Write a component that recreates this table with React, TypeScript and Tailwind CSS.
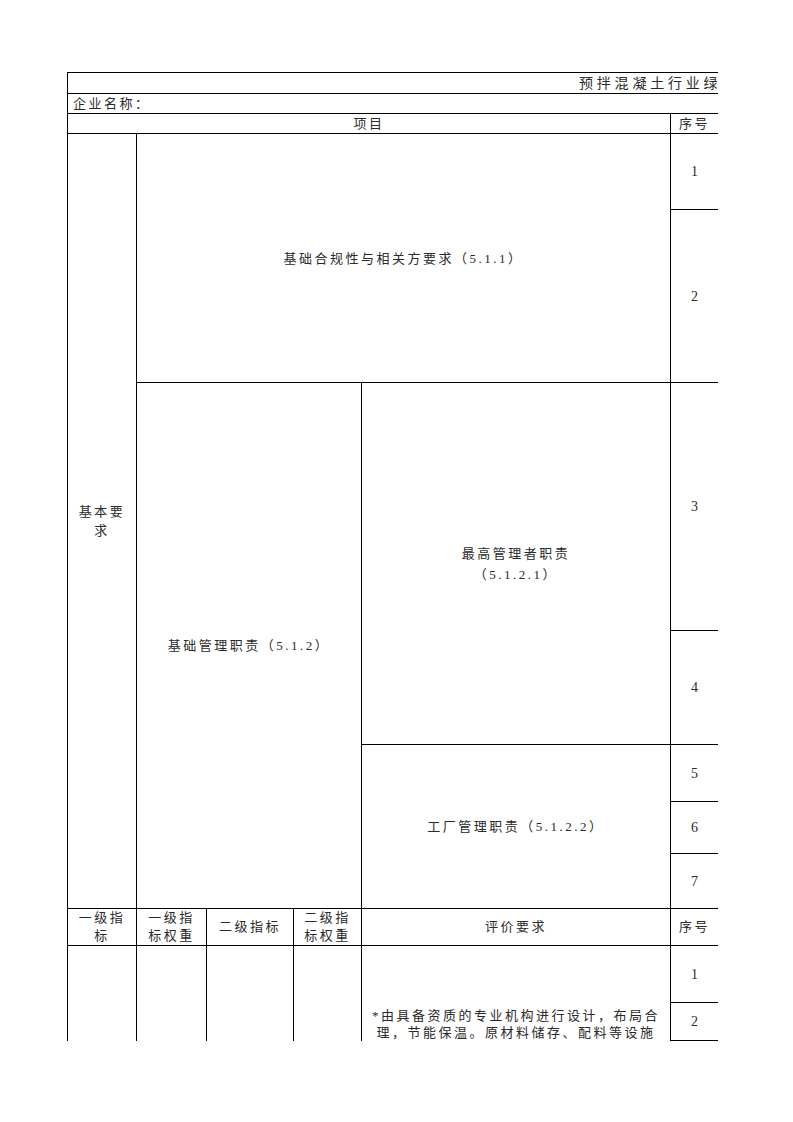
import React from 'react'

const cell = 'border border-black p-0 text-center align-middle'

const seq = (n: number) => (
  <td className={cell}>
    <span className="tracking-normal text-[14px]">{n}</span>
  </td>
)

export default function App() {
  return (
    <div className="min-h-[1122px] w-[793px] bg-white pt-[72px] pl-[67px] font-['Liberation_Serif','Noto_Sans_CJK_SC',serif] text-[13px] leading-[19px] tracking-[2.5px] text-[#2a2a2a]">
      <div className="w-[651px] h-[969px] overflow-hidden">
        <table className="w-[651px] table-fixed border-collapse">
          <colgroup>
            <col className="w-[69px]" />
            <col className="w-[70px]" />
            <col className="w-[87px]" />
            <col className="w-[68px]" />
            <col className="w-[309px]" />
            <col className="w-[48px]" />
          </colgroup>
          <tbody>
            {/* title */}
            <tr className="h-[21px]">
              <td colSpan={6} className="border border-black border-r-0 p-0">
                <div className="overflow-hidden whitespace-nowrap pl-[511px] text-[14px] tracking-[3.8px]">
                  预拌混凝土行业绿色工厂评价表
                </div>
              </td>
            </tr>
            <tr className="h-[20px]">
              <td colSpan={6} className="border border-black border-r-0 p-0 pl-[5px] text-left">
                企业名称：
              </td>
            </tr>
            <tr className="h-[20px]">
              <td colSpan={5} className={cell}>项目</td>
              <td className={cell}>序号</td>
            </tr>

            {/* basic requirements */}
            <tr className="h-[76px]">
              <td rowSpan={7} className={cell}>
                基本要<br />求
              </td>
              <td colSpan={4} rowSpan={2} className={cell}>
                基础合规性与相关方要求（5.1.1）
              </td>
              {seq(1)}
            </tr>
            <tr className="h-[173px]">{seq(2)}</tr>
            <tr className="h-[248px]">
              <td colSpan={3} rowSpan={5} className={cell}>
                基础管理职责（5.1.2）
              </td>
              <td rowSpan={2} className={cell + ' leading-[21px]'}>
                最高管理者职责<br />（5.1.2.1）
              </td>
              {seq(3)}
            </tr>
            <tr className="h-[114px]">{seq(4)}</tr>
            <tr className="h-[57px]">
              <td rowSpan={3} className={cell}>
                工厂管理职责（5.1.2.2）
              </td>
              {seq(5)}
            </tr>
            <tr className="h-[52px]">{seq(6)}</tr>
            <tr className="h-[55px]">{seq(7)}</tr>

            {/* evaluation header */}
            <tr className="h-[37px] leading-[18px]">
              <td className={cell}>一级指<br />标</td>
              <td className={cell}>一级指<br />标权重</td>
              <td className={cell}>二级指标</td>
              <td className={cell}>二级指<br />标权重</td>
              <td className={cell}>评价要求</td>
              <td className={cell}>序号</td>
            </tr>
            <tr className="h-[57px]">
              <td rowSpan={3} className={cell}></td>
              <td rowSpan={3} className={cell}></td>
              <td rowSpan={3} className={cell}></td>
              <td rowSpan={3} className={cell}></td>
              <td rowSpan={3} className="border border-black p-0 align-top">
                <div className="pt-[61px] px-[4px] text-center leading-[17px]">
                  *由具备资质的专业机构进行设计，布局合<br />
                  理，节能保温。原材料储存、配料等设施<br />
                  宜采用封闭式结构。
                </div>
              </td>
              {seq(1)}
            </tr>
            <tr className="h-[38px]">{seq(2)}</tr>
            <tr className="h-[60px]">
              <td className={cell}></td>
            </tr>
          </tbody>
        </table>
      </div>
    </div>
  )
}
